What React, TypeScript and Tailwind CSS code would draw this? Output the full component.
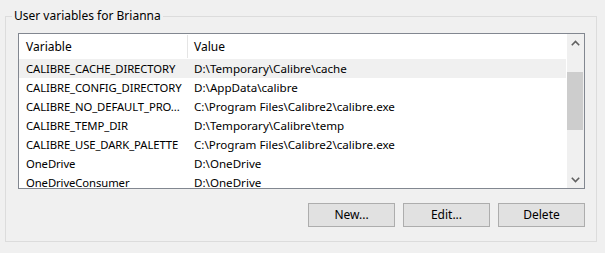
import React from "react";

const rows: [string, string][] = [
  ["CALIBRE_CACHE_DIRECTORY", "D:\\Temporary\\Calibre\\cache"],
  ["CALIBRE_CONFIG_DIRECTORY", "D:\\AppData\\calibre"],
  ["CALIBRE_NO_DEFAULT_PRO...", "C:\\Program Files\\Calibre2\\calibre.exe"],
  ["CALIBRE_TEMP_DIR", "D:\\Temporary\\Calibre\\temp"],
  ["CALIBRE_USE_DARK_PALETTE", "C:\\Program Files\\Calibre2\\calibre.exe"],
  ["OneDrive", "D:\\OneDrive"],
  ["OneDriveConsumer", "D:\\OneDrive"],
];

function Chevron({ up }: { up?: boolean }) {
  return (
    <svg width="9" height="6" viewBox="0 0 9 6">
      <path
        d={up ? "M0.8 5.2 L4.5 1.5 L8.2 5.2" : "M0.8 0.8 L4.5 4.5 L8.2 0.8"}
        fill="none"
        stroke="#606060"
        strokeWidth="1.6"
      />
    </svg>
  );
}

export default function App() {
  return (
    <div
      className="w-[605px] h-[253px] bg-[#f0f0f0] text-[12px] text-black overflow-hidden pt-[16px] pl-[5px]"
      style={{ fontFamily: '"Noto Sans", "Open Sans", sans-serif' }}
    >
      <div className="relative w-[592px] h-[226px] border border-[#dcdcdc] pl-[12px] pt-[16px]">
        <span className="absolute left-[6px] top-[-9px] px-[2px] bg-[#f0f0f0] leading-[16px] whitespace-nowrap">
          User variables for Brianna
        </span>

        <div className="w-[567px] h-[156px] border border-[#828790] bg-white flex">
          <div className="flex-1 flex flex-col overflow-hidden">
            <div className="h-[25px] flex items-center shrink-0">
              <div className="w-[169px] h-[23px] pl-[7px] flex items-center border-r border-[#e5e5e5]">
                Variable
              </div>
              <div className="pl-[6px]">Value</div>
            </div>
            {rows.map(([k, v], i) => (
              <div
                key={k}
                className={`h-[19px] shrink-0 flex items-center leading-[19px] whitespace-nowrap ${
                  i === 0 ? "bg-[#f0f0f0]" : ""
                }`}
              >
                <div className="w-[169px] pl-[7px] overflow-hidden text-[11.3px] tracking-[-0.1px]">{k}</div>
                <div className="pl-[6px] text-[11.6px]">{v}</div>
              </div>
            ))}
          </div>
          <div className="w-[17px] ml-[1px] bg-[#f0f0f0] flex flex-col shrink-0">
            <div className="h-[17px] flex items-center justify-center">
              <Chevron up />
            </div>
            <div className="flex-1">
              <div className="mt-[21px] h-[58px] mr-[1px] bg-[#cdcdcd]" />
            </div>
            <div className="h-[17px] flex items-center justify-center">
              <Chevron />
            </div>
          </div>
        </div>

        <div className="w-[567px] mt-[14px] flex justify-end gap-[8px]">
          {["New...", "Edit...", "Delete"].map((b) => (
            <button
              key={b}
              className="w-[87px] h-[24px] bg-[#e1e1e1] border border-[#adadad] flex items-center justify-center leading-[16px]"
            >
              {b}
            </button>
          ))}
        </div>
      </div>
    </div>
  );
}
